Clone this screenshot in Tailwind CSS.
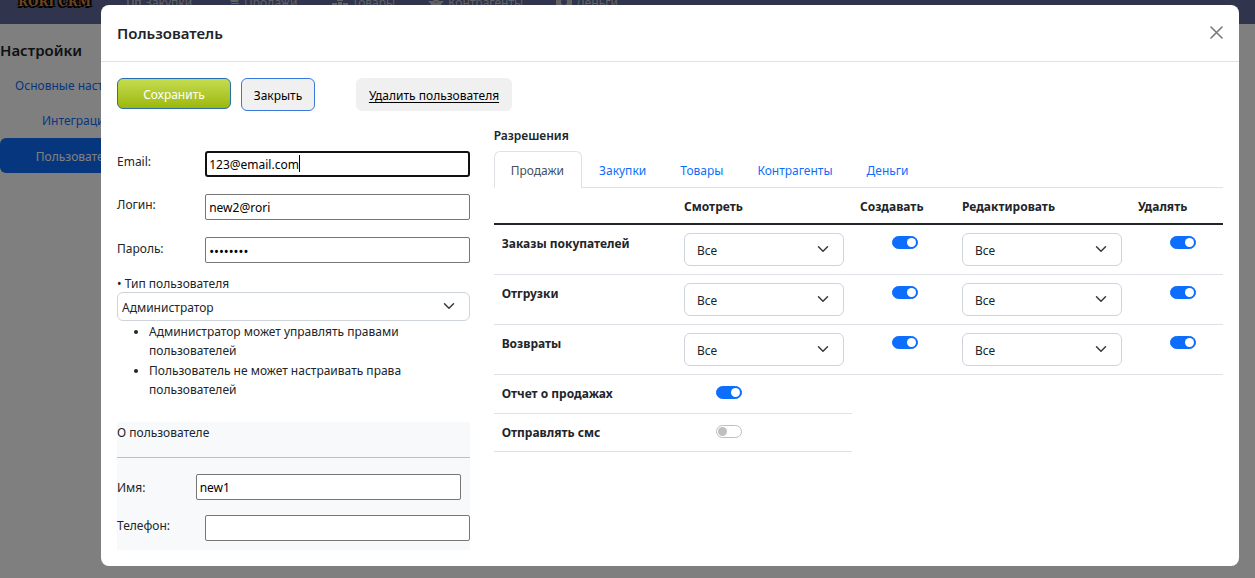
<!DOCTYPE html>
<html lang="ru">
<head>
<meta charset="utf-8">
<meta name="viewport" content="width=device-width, initial-scale=1">
<title>Пользователь</title>
<script src="https://cdn.jsdelivr.net/npm/@tailwindcss/browser@4"></script>
</head>
<body class="min-h-screen overflow-hidden bg-white font-['Noto_Sans','Open_Sans',sans-serif] text-xs leading-[19px] text-[#212529]">

<!-- Page under the dialog -->
<header class="-mt-5 flex h-11 items-center bg-[#60689a] text-[#c4c4c4]">
  <a href="#" class="w-[110px] pl-[18px] font-['DejaVu_Serif',serif] text-xs font-bold whitespace-nowrap text-[#d98a38] [text-shadow:0_0_2px_#000,2px_1px_0_#000,-1px_-1px_0_#000,1px_-1px_0_#000,-1px_2px_0_#000]">RORI CRM</a>
  <nav class="flex flex-1 items-center pl-[17px]">
    <a href="#" class="flex w-[101px] items-center gap-1">
      <svg class="h-3 w-[14px]" viewBox="0 0 14 12" fill="none" stroke="currentColor" stroke-width="1.5"><path d="M1 0v10h5V0M9 11V4h4v7"/></svg>Закупки</a>
    <a href="#" class="flex w-[104px] items-center gap-1">
      <svg class="h-3 w-3" viewBox="0 0 12 12" fill="currentColor"><path d="M0 0h12l-2 6H3zM3 7h8v1H3zM3 9h2v2H3zM8 9h2v2H8z"/></svg>Продажи</a>
    <a href="#" class="flex w-[96px] items-center gap-1">
      <svg class="h-3 w-4" viewBox="0 0 16 12" fill="currentColor"><path d="M5 0h6v5H5zM0 7h5v4H0zM6 6h4v5H6zM11 7h5v4h-5z"/></svg>Товары</a>
    <a href="#" class="flex w-[128px] items-center gap-1">
      <svg class="h-3 w-4" viewBox="0 0 16 12" fill="currentColor"><circle cx="8" cy="3" r="3"/><path d="M0 5h5l3 2 3-2h5l-3 3v3H3V8z"/></svg>Контрагенты</a>
    <a href="#" class="flex items-center gap-1">
      <svg class="h-3 w-4" viewBox="0 0 16 12" fill="currentColor" fill-rule="evenodd"><path d="M0 1h16v10H0zM8 3a3 3 0 1 0 0 6 3 3 0 0 0 0-6"/></svg>Деньги</a>
  </nav>
</header>
<aside class="w-[154px] pt-4">
  <h2 class="mb-2 text-[15px] leading-5 font-semibold">Настройки</h2>
  <nav class="flex flex-col text-center text-[#0d6efd]">
    <a href="#" class="py-2 whitespace-nowrap">Основные настройки</a>
    <a href="#" class="py-2">Интеграции</a>
    <a href="#" class="rounded-md bg-[#0d6efd] pt-[9px] pb-[7px] text-white">Пользователи</a>
  </nav>
</aside>

<!-- Dialog -->
<div class="fixed inset-0 flex items-start bg-black/50 pt-[5px] pr-4 pl-[101px]">
  <div role="dialog" aria-labelledby="title" class="flex-1 rounded-lg bg-white">
    <div class="flex h-14 items-center justify-between px-4">
      <h1 id="title" class="text-[15px] font-semibold">Пользователь</h1>
      <button type="button" aria-label="Закрыть окно" class="text-[#777777]">
        <svg class="mb-0.5 size-[13px]" viewBox="0 0 13 13" fill="none" stroke="currentColor" stroke-width="1.6" stroke-linecap="round"><path d="M1 1l11 11M12 1L1 12"/></svg>
      </button>
    </div>
    <form class="border-t border-[#dee2e6] p-4">
      <div class="flex items-start">
        <button type="submit" class="mr-[10px] h-[31px] w-[114px] rounded-md border border-[#2a6db0] bg-linear-to-b from-[#c5dc4c] to-[#9db800] pt-0.5 text-white">Сохранить</button>
        <button type="button" class="mr-[41px] h-[33px] w-[74px] rounded-md border border-[#3b78dc] bg-[#f0f0f0] pt-0.5 text-black">Закрыть</button>
        <button type="button" class="h-[33px] w-[156px] rounded-md bg-[#f0f0f0] pt-0.5 text-black underline underline-offset-2">Удалить пользователя</button>
      </div>

      <div class="mt-[15px] grid grid-cols-3 gap-6">
        <div class="pt-[25px]">
          <div class="flex flex-col gap-[17px]">
            <div class="flex items-start justify-between">
              <label for="email" class="pt-px">Email:</label>
              <div class="relative w-3/4">
                <input id="email" type="email" value="123@email.com" class="block h-[26px] w-full rounded-[3px] border-2 border-[#101010] px-0.5 text-black outline-none">
                <span class="absolute top-1 left-[94px] h-[17px] w-px bg-black"></span>
              </div>
            </div>
            <div class="flex items-start justify-between">
              <label for="login" class="pt-px">Логин:</label>
              <input id="login" type="text" value="new2@rori" class="h-[26px] w-3/4 rounded-[2px] border border-[#767676] px-[3px] text-black">
            </div>
            <div class="flex items-start justify-between">
              <label for="password" class="pt-0.5">Пароль:</label>
              <input id="password" type="password" value="password" class="h-[26px] w-3/4 rounded-[2px] border border-[#767676] px-[3px] pt-0.5 text-[13px] text-black">
            </div>
          </div>

          <label for="type" class="mt-[10px] block pt-0.5 leading-[17px]">• Тип пользователя</label>
          <div class="relative">
            <select id="type" class="block h-[29px] w-full appearance-none rounded-md border border-[#ced4da] bg-white px-1 pt-0.5">
              <option>Администратор</option>
              <option>Пользователь</option>
            </select>
            <svg class="pointer-events-none absolute top-2 right-[15px] size-3" viewBox="0 0 16 16" fill="none" stroke="#343a40" stroke-width="2" stroke-linecap="round" stroke-linejoin="round"><path d="m2 5 6 6 6-6"/></svg>
          </div>
          <ul class="list-disc pt-px pr-6 pl-8">
            <li>Администратор может управлять правами пользователей</li>
            <li class="pt-px">Пользователь не может настраивать права пользователей</li>
          </ul>

          <section class="mt-[23px] bg-[#f8f9fa] pb-[9px]">
            <h2 class="pt-px">О пользователе</h2>
            <hr class="mt-[15px] mb-4 border-[#bcbebf]">
            <div class="flex items-center justify-between pr-[9px]">
              <label for="name">Имя:</label>
              <input id="name" type="text" value="new1" class="h-[26px] w-[265px] rounded-[2px] border border-[#767676] bg-white px-[3px] text-black">
            </div>
            <div class="mt-[15px] flex items-start justify-between">
              <label for="phone" class="pt-px">Телефон:</label>
              <input id="phone" type="tel" class="h-[26px] w-3/4 rounded-[2px] border border-[#767676] bg-white px-[3px] text-black">
            </div>
          </section>
        </div>

        <div class="col-span-2">
          <h2 class="mb-[6px] font-semibold">Разрешения</h2>
          <div role="tablist" class="flex border-b border-[#dee2e6] text-[#0d6efd]">
            <button type="button" role="tab" aria-selected="true" class="-mb-px rounded-t-md border border-b-0 border-[#dee2e6] bg-white pt-[9px] pr-[17px] pb-2 pl-4 text-[#495057]">Продажи</button>
            <button type="button" role="tab" class="px-[17px] pt-[9px] pb-[7px]">Закупки</button>
            <button type="button" role="tab" class="px-[17px] pt-[9px] pb-[7px]">Товары</button>
            <button type="button" role="tab" class="px-[17px] pt-[9px] pb-[7px]">Контрагенты</button>
            <button type="button" role="tab" class="px-[17px] pt-[9px] pb-[7px]">Деньги</button>
          </div>

          <table class="w-full table-fixed text-left">
            <thead>
              <tr class="border-b-2 border-[#212529]">
                <th class="w-[25%] px-2"></th>
                <th class="w-[176px] px-2 pt-[9px] pb-[7px]">Смотреть</th>
                <th class="w-[102px] px-2 pt-[9px] pb-[7px]">Создавать</th>
                <th class="w-[176px] px-2 pt-[9px] pb-[7px]">Редактировать</th>
                <th class="px-2 pt-[9px] pb-[7px]">Удалять</th>
              </tr>
            </thead>
            <tbody id="rows"></tbody>
          </table>

          <table class="w-[358px] table-fixed text-left">
            <tbody>
              <tr class="h-[38px] border-b border-[#dee2e6] align-top">
                <th class="w-[51%] px-2 pt-[9px]"><label for="report">Отчет о продажах</label></th>
                <td class="pt-2 pl-10"><input id="report" type="checkbox" role="switch" checked class="mt-[3px] flex h-[13px] w-[26px] appearance-none items-center rounded-full border border-[#bfbfbf] bg-white px-px before:size-[9px] before:rounded-full before:bg-[#bfbfbf] before:content-[''] checked:justify-end checked:border-[#0d6efd] checked:bg-[#0d6efd] checked:before:bg-white"></td>
              </tr>
              <tr class="h-[38px] border-b border-[#dee2e6] align-top">
                <th class="px-2 pt-[9px]"><label for="sms">Отправлять смс</label></th>
                <td class="pt-2 pl-10"><input id="sms" type="checkbox" role="switch" class="mt-[3px] flex h-[13px] w-[26px] appearance-none items-center rounded-full border border-[#bfbfbf] bg-white px-px before:size-[9px] before:rounded-full before:bg-[#bfbfbf] before:content-[''] checked:justify-end checked:border-[#0d6efd] checked:bg-[#0d6efd] checked:before:bg-white"></td>
              </tr>
            </tbody>
          </table>
        </div>
      </div>
    </form>
  </div>
</div>

<script>
  const select = (label) => `
    <td class="p-2"><div class="relative">
      <select aria-label="${label}" class="block h-[33px] w-full appearance-none rounded-md border border-[#ced4da] bg-white px-3 pt-0.5"><option>Все</option><option>Только свои</option></select>
      <svg class="pointer-events-none absolute top-[10px] right-[15px] size-3" viewBox="0 0 16 16" fill="none" stroke="#343a40" stroke-width="2" stroke-linecap="round" stroke-linejoin="round"><path d="m2 5 6 6 6-6"/></svg>
    </div></td>`;
  const toggle = (label) => `
    <td class="p-2 pl-10"><input type="checkbox" role="switch" checked aria-label="${label}" class="mt-[3px] flex h-[13px] w-[26px] appearance-none items-center rounded-full border border-[#bfbfbf] bg-white px-px before:size-[9px] before:rounded-full before:bg-[#bfbfbf] before:content-[''] checked:justify-end checked:border-[#0d6efd] checked:bg-[#0d6efd] checked:before:bg-white"></td>`;
  document.getElementById('rows').innerHTML = ['Заказы покупателей', 'Отгрузки', 'Возвраты'].map((name) => `
    <tr class="border-b border-[#dee2e6] align-top">
      <th class="px-2 pt-[9px]">${name}</th>
      ${select(name + ': смотреть')}${toggle(name + ': создавать')}${select(name + ': редактировать')}${toggle(name + ': удалять')}
    </tr>`).join('');
</script>
</body>
</html>
